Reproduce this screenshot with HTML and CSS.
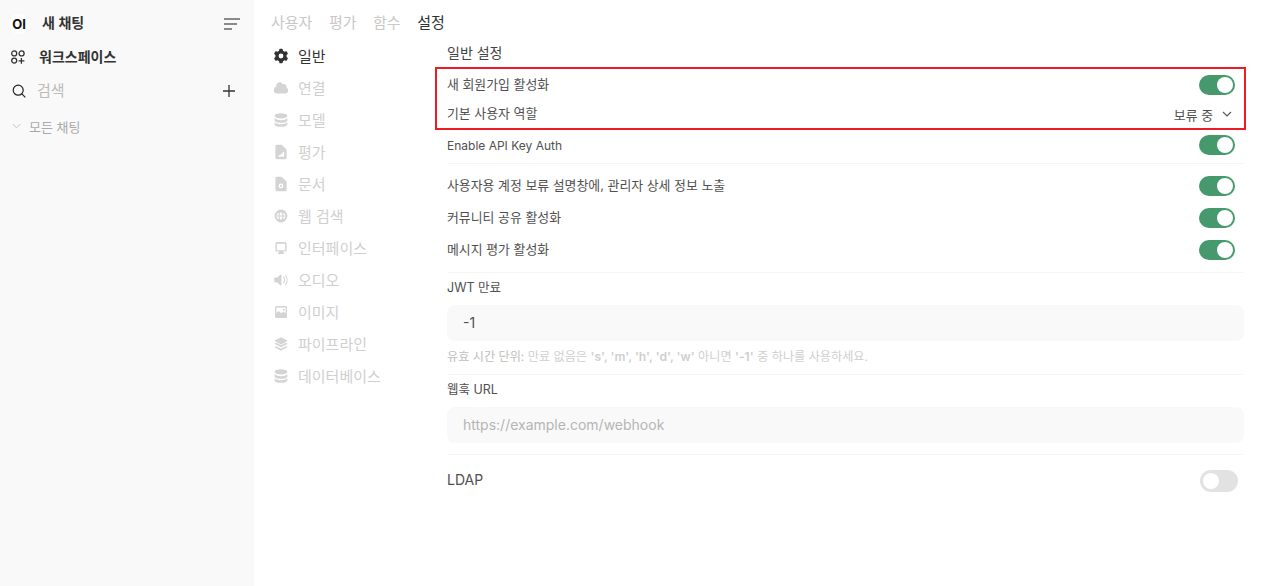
FILE: index.html
```html
<!DOCTYPE html>
<html lang="ko">
<head>
  <meta charset="UTF-8" />
  <meta name="viewport" content="width=device-width, initial-scale=1.0"/>
  <title>관리자 설정</title>
  <link rel="stylesheet" href="styles.css">
</head>
<body>

<aside class="sidebar">
  <div class="side-row new-chat">
    <span class="logo">OI</span>
    <span class="side-title">새 채팅</span>
    <svg class="side-end menu-icon" viewBox="0 0 16 12" fill="none" stroke="#666" stroke-width="1.4"><path d="M0 1h16M0 6h13M0 11h8"/></svg>
  </div>
  <div class="side-row workspace">
    <svg class="work-icon" viewBox="0 0 14 14" fill="none" stroke="#333" stroke-width="1.3"><circle cx="3.2" cy="3.4" r="2.5"/><circle cx="10.6" cy="3.4" r="2.5"/><circle cx="3.2" cy="10.600" r="2.500"/><path d="M10.400 8v5.800M7.600 10.900h5.800"/></svg>
    <span class="side-title">워크스페이스</span>
  </div>
  <div class="side-row search">
    <svg class="search-icon" viewBox="0 0 14 14" fill="none" stroke="#222" stroke-width="1.2"><circle cx="6.2" cy="6.2" r="5"/><path d="M9.900 9.900l3.400 3.400"/></svg>
    <span class="search-text">검색</span>
    <svg class="side-end plus-icon" viewBox="0 0 12 12" fill="none" stroke="#333" stroke-width="1.3"><path d="M6 0v12M0 6h12"/></svg>
  </div>
  <div class="side-row all-chats">
    <svg class="chev-small" viewBox="0 0 10 6" fill="none" stroke="#bbb" stroke-width="1"><path d="M1 1l4 4 4-4"/></svg>
    <span>모든 채팅</span>
  </div>
</aside>

<main class="main">
  <nav class="tabs">
    <span>사용자</span>
    <span>평가</span>
    <span>함수</span>
    <span class="active">설정</span>
  </nav>

  <div class="content">
    <ul class="settings-nav">
      <li class="active">
        <svg viewBox="0 0 20 20"><path fill-rule="evenodd" d="M7.84 1.804A1 1 0 0 1 8.82 1h2.36a1 1 0 0 1 .98.804l.331 1.652a6.993 6.993 0 0 1 1.929 1.115l1.598-.54a1 1 0 0 1 1.186.447l1.18 2.044a1 1 0 0 1-.205 1.251l-1.267 1.113a7.047 7.047 0 0 1 0 2.228l1.267 1.113a1 1 0 0 1 .206 1.25l-1.18 2.045a1 1 0 0 1-1.187.447l-1.598-.54a6.993 6.993 0 0 1-1.929 1.115l-.33 1.652a1 1 0 0 1-.98.804H8.82a1 1 0 0 1-.98-.804l-.331-1.652a6.993 6.993 0 0 1-1.929-1.115l-1.598.54a1 1 0 0 1-1.186-.447l-1.18-2.044a1 1 0 0 1 .205-1.251l1.267-1.114a7.05 7.05 0 0 1 0-2.227L1.821 7.773a1 1 0 0 1-.206-1.25l1.18-2.045a1 1 0 0 1 1.187-.447l1.598.54A6.992 6.992 0 0 1 7.51 3.456l.33-1.652ZM10 13a3 3 0 1 0 0-6 3 3 0 0 0 0 6Z"/></svg>
        일반
      </li>
      <li>
        <svg viewBox="0 0 20 20"><path d="M1 12.5A4.5 4.5 0 0 0 5.5 17H15a4 4 0 0 0 1.866-7.539 3.504 3.504 0 0 0-4.504-4.272A4.5 4.5 0 0 0 4.06 8.235 4.502 4.502 0 0 0 1 12.5Z"/></svg>
        연결
      </li>
      <li>
        <svg viewBox="0 0 20 20"><ellipse cx="10" cy="4.800" rx="8" ry="3.300"/><path d="M2 7.600C3.500 9.600 7 10.200 10 10.200s6.500-.6 8-2.600v2.600c0 1.900-3.600 3.300-8 3.300s-8-1.400-8-3.300Z"/><path d="M2 12.700C3.500 14.700 7 15.200 10 15.200s6.500-.5 8-2.500v2.500c0 1.900-3.600 3.300-8 3.300s-8-1.400-8-3.300Z"/></svg>
        모델
      </li>
      <li>
        <svg viewBox="0 0 20 20"><path fill-rule="evenodd" d="M4.500 1A1.500 1.500 0 0 0 3 2.500v15A1.500 1.500 0 0 0 4.500 19h11a1.500 1.500 0 0 0 1.500-1.500V7.621a1.500 1.500 0 0 0-.44-1.060l-5.120-5.122A1.500 1.500 0 0 0 10.378 1H4.500ZM14 10v6H7v-1.800h2.500v-2H12V10h2Z"/></svg>
        평가
      </li>
      <li>
        <svg viewBox="0 0 20 20"><path fill-rule="evenodd" d="M4.500 1A1.500 1.500 0 0 0 3 2.500v15A1.500 1.500 0 0 0 4.500 19h11a1.500 1.500 0 0 0 1.500-1.500V7.621a1.500 1.500 0 0 0-.44-1.060l-5.120-5.122A1.500 1.500 0 0 0 10.378 1H4.500ZM10 9.500a3 3 0 1 0 0 6 3 3 0 0 0 0-6Zm0 1.700a1.300 1.300 0 1 1 0 2.600 1.300 1.300 0 0 1 0-2.600Z"/></svg>
        문서
      </li>
      <li>
        <svg viewBox="0 0 20 20"><path fill-rule="evenodd" d="M10 2a8 8 0 1 0 0 16 8 8 0 0 0 0-16ZM4 9.300h2.700c.1-1.500.4-2.800.9-3.800A6 6 0 0 0 4 9.300Zm4.200 0h3.600c-.1-1.700-.8-3.600-1.800-4.300-1 .7-1.700 2.600-1.800 4.300Zm5.100 0H16a6 6 0 0 0-3.600-3.800c.5 1 .8 2.300.9 3.800ZM4 10.700a6 6 0 0 0 3.600 3.800c-.5-1-.8-2.300-.9-3.800H4Zm4.200 0c.1 1.700.8 3.600 1.800 4.300 1-.7 1.700-2.600 1.800-4.300H8.200Zm5.100 0c-.1 1.500-.4 2.800-.9 3.800a6 6 0 0 0 3.600-3.800h-2.700Z"/></svg>
        웹 검색
      </li>
      <li>
        <svg viewBox="0 0 20 20"><path fill-rule="evenodd" d="M3 4.500A2 2 0 0 1 5 2.500h10a2 2 0 0 1 2 2v8a2 2 0 0 1-2 2h-2.500v1.500h1.500v1.500H6V16h1.500v-1.500H5a2 2 0 0 1-2-2v-8Zm1.800.3v7.900h10.400V4.800H4.800Z"/></svg>
        인터페이스
      </li>
      <li>
        <svg viewBox="0 0 20 20"><path d="M9.500 3.100a.6.600 0 0 1 1 .45v12.900a.6.600 0 0 1-1 .45L5.300 13H2.500a1 1 0 0 1-1-1V8a1 1 0 0 1 1-1h2.800l4.200-3.900Z"/><path d="M13.200 6.500c1.800 2 1.800 5 0 7M15.700 4.500c2.900 3.200 2.900 7.800 0 11" fill="none" stroke="#d4d4d4" stroke-width="1.300" stroke-linecap="round"/></svg>
        오디오
      </li>
      <li>
        <svg viewBox="0 0 20 20"><path fill-rule="evenodd" d="M4.500 2.500h11a2 2 0 0 1 2 2v11a2 2 0 0 1-2 2h-11a2 2 0 0 1-2-2v-11a2 2 0 0 1 2-2Zm-.3 8.800 2.800-2.600 3.200 3 2.800-2.400 2.800 2.400V4.300H4.200v7ZM13.500 6a1.200 1.200 0 1 1 0 2.400 1.200 1.200 0 0 1 0-2.400Z"/></svg>
        이미지
      </li>
      <li>
        <svg viewBox="0 0 20 20"><path d="M10 1.500 18.500 6 10 10.500 1.500 6 10 1.500Z"/><path d="M1.700 9.600 4 8.400l6 3.200 6-3.200 2.300 1.200L10 14 1.700 9.600Z"/><path d="M1.700 13.900 4 12.700l6 3.200 6-3.200 2.300 1.200L10 18.300 1.700 13.900Z"/></svg>
        파이프라인
      </li>
      <li>
        <svg viewBox="0 0 20 20"><ellipse cx="10" cy="4.800" rx="8" ry="3.300"/><path d="M2 7.600C3.500 9.600 7 10.200 10 10.200s6.500-.6 8-2.600v2.600c0 1.900-3.600 3.300-8 3.300s-8-1.400-8-3.300Z"/><path d="M2 12.700C3.500 14.700 7 15.200 10 15.200s6.500-.5 8-2.500v2.500c0 1.900-3.600 3.300-8 3.300s-8-1.400-8-3.300Z"/></svg>
        데이터베이스
      </li>
    </ul>

    <section class="panel">
      <h2 class="panel-title">일반 설정</h2>

      <div class="highlight">
        <div class="row row-first">
          <span>새 회원가입 활성화</span>
          <span class="toggle on"></span>
        </div>
        <div class="row row-role">
          <span>기본 사용자 역할</span>
          <span class="select">보류 중
            <svg viewBox="0 0 10 6" fill="none" stroke="#555" stroke-width="1.1"><path d="M1 1l4 4 4-4"/></svg>
          </span>
        </div>
      </div>

      <div class="row row-api">
        <span>Enable API Key Auth</span>
        <span class="toggle on"></span>
      </div>
      <hr class="sep sep-api">

      <div class="row row-tall">
        <span>사용자용 계정 보류 설명창에, 관리자 상세 정보 노출</span>
        <span class="toggle on"></span>
      </div>
      <div class="row row-tall">
        <span>커뮤니티 공유 활성화</span>
        <span class="toggle on"></span>
      </div>
      <div class="row row-tall">
        <span>메시지 평가 활성화</span>
        <span class="toggle on"></span>
      </div>
      <hr class="sep sep-msg">

      <label class="field-label">JWT 만료</label>
      <div class="field field-value">-1</div>
      <p class="help">유효 시간 단위: <span class="help-light">만료 없음은 <b>'s', 'm', 'h', 'd', 'w'</b> 아니면 <b>'-1'</b> 중 하나를 사용하세요.</span></p>
      <hr class="sep sep-help">

      <label class="field-label">웹훅 URL</label>
      <div class="field field-placeholder">https://example.com/webhook</div>
      <hr class="sep sep-hook">

      <div class="row row-ldap">
        <span class="ldap-text">LDAP</span>
        <span class="toggle off"></span>
      </div>
    </section>
  </div>
</main>

</body>
</html>
```

FILE: styles.css
```css
* {
  box-sizing: border-box;
}
body {
  margin: 0;
  height: 100vh;
  display: flex;
  background: #fff;
  color: #505050;
  font-family: Inter, "Noto Sans CJK KR", sans-serif;
  overflow: hidden;
}

/* sidebar */
.sidebar {
  width: 254px;
  flex-shrink: 0;
  background: #f9f9f9;
  padding-top: 6px;
}
.side-row {
  display: flex;
  align-items: center;
  height: 32px;
  padding-left: 9px;
  padding-right: 14px;
}
.side-end {
  margin-left: auto;
}
.logo {
  width: 20px;
  height: 20px;
  margin-top: 3px;
  border-radius: 50%;
  background: #fff;
  color: #111;
  font-size: 13px;
  font-weight: 700;
  text-align: center;
  line-height: 20px;
}
.side-title {
  font-size: 14px;
  font-weight: 600;
  color: #333;
}
.new-chat .side-title {
  margin-left: 13px;
}
.menu-icon {
  width: 16px;
  height: 12px;
  margin-top: 4px;
}
.workspace {
  margin-top: 2px;
  padding-left: 11px;
}
.workspace .side-title {
  margin-left: 14px;
}
.work-icon {
  width: 14px;
  height: 14px;
  margin-top: 2px;
}
.search {
  margin-top: 1px;
  padding-left: 12px;
  padding-right: 19px;
}
.search-icon {
  width: 14px;
  height: 14px;
  margin-top: 4px;
}
.search-text {
  margin-left: 11px;
  font-size: 15px;
  color: #bbb;
}
.plus-icon {
  width: 12px;
  height: 12px;
  margin-top: 4px;
}
.all-chats {
  margin-top: 5px;
  padding-left: 12px;
  font-size: 13px;
  color: #aaa;
}
.chev-small {
  width: 9px;
  height: 6px;
  margin-right: 8px;
}

/* main */
.main {
  flex: 1;
  min-width: 0;
  padding: 12px 30px 0 17px;
}
.tabs {
  display: flex;
  gap: 16.5px;
  height: 21px;
  line-height: 21px;
  font-size: 15px;
  color: #c8c8c8;
}
.tabs .active {
  color: #333;
}
.content {
  display: flex;
}
.settings-nav {
  list-style: none;
  margin: 7px 0 0;
  padding: 0;
  width: 176px;
  flex-shrink: 0;
}
.settings-nav li {
  display: flex;
  align-items: center;
  gap: 9px;
  height: 31.97px;
  padding-left: 2px;
  font-size: 15px;
  color: #cfcfcf;
  white-space: nowrap;
}
.settings-nav svg {
  width: 16px;
  height: 16px;
  fill: #d4d4d4;
}
.settings-nav .active {
  color: #333;
}
.settings-nav .active svg {
  fill: #333;
}

/* settings panel */
.panel {
  flex: 1;
  min-width: 0;
  font-size: 12.9px;
}
.panel-title {
  margin: 10px 0 0;
  height: 20px;
  line-height: 20px;
  font-size: 14px;
  font-weight: 400;
  color: #444;
}
.highlight {
  margin: 4px -2px 0 -12px;
  padding: 6px 0 4px 10px;
  border: 2px solid #ed1c24;
}
.row {
  display: flex;
  align-items: center;
  justify-content: space-between;
  padding-right: 9px;
}
.row > span:first-child {
  padding-bottom: 3px;
}
.row-first {
  height: 20px;
  padding-right: 9px;
}
.row-role {
  height: 20px;
  margin-top: 9px;
  padding-right: 12px;
}
.row-api {
  height: 20px;
  margin-top: 5px;
  font-size: 12px;
}
.row-api > span:first-child {
  padding-bottom: 0;
}
.row-tall {
  height: 32px;
}
.select {
  display: flex;
  align-items: center;
  gap: 9px;
}
.select svg {
  width: 10px;
  height: 6px;
}
.toggle {
  display: flex;
  width: 36px;
  height: 20px;
  border-radius: 10px;
  padding: 2px;
}
.toggle::after {
  content: "";
  width: 16px;
  height: 16px;
  border-radius: 50%;
  background: #fff;
}
.toggle.on {
  background: #45996d;
  justify-content: flex-end;
}
.toggle.off {
  background: #e2e2e2;
  width: 38px;
  height: 22px;
  border-radius: 11px;
  padding: 3px;
}
.sep {
  margin: 0;
  border: 0;
  border-top: 1px solid #f5f5f5;
}
.sep-api {
  margin-top: 8px;
  margin-bottom: 6px;
}
.sep-msg {
  margin-top: 6px;
}
.sep-help {
  margin-top: 9px;
}
.sep-hook {
  margin-top: 11px;
}
.field-label {
  display: block;
  height: 18px;
  line-height: 18px;
  margin-top: 6px;
  font-size: 12.5px;
}
.field {
  height: 36px;
  line-height: 36px;
  margin-top: 8px;
  padding-left: 16px;
  background: #f9f9f9;
  border-radius: 8px;
  font-size: 14px;
}
.field-placeholder {
  color: #b5b5b5;
}
.help {
  margin: 8px 0 0;
  height: 16px;
  line-height: 16px;
  font-size: 12.15px;
  color: #bdbdbd;
}
.help-light {
  color: #cfcfcf;
}
.help b {
  font-weight: 600;
}
.row-ldap {
  height: 22px;
  margin-top: 15px;
  padding-right: 6px;
  font-size: 14px;
}
.row .ldap-text {
  padding-bottom: 6px;
}
```
